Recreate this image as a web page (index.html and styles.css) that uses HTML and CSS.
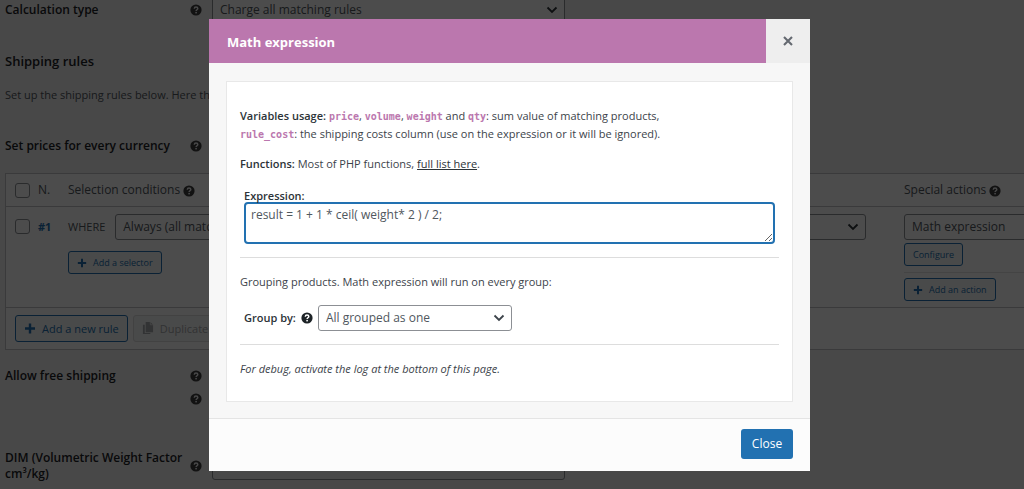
FILE: index.html
```html
<!DOCTYPE html>
<html lang="en">
<head>
<meta charset="utf-8">
<title>Shipping rules</title>
<link rel="stylesheet" href="styles.css">
</head>
<body>
<svg class="sprite" aria-hidden="true">
  <symbol id="i-help" viewBox="0 0 12 12"><circle cx="6" cy="6" r="5.6" fill="currentColor"/><path d="M4.3 4.7C4.3 3.5 5 3 6 3s1.8.6 1.8 1.5C7.8 5.7 6.1 5.8 6.1 7" fill="none" stroke="var(--mark)" stroke-width="1.5"/><rect x="5.3" y="7.9" width="1.6" height="1.5" fill="var(--mark)"/></symbol>
  <symbol id="i-plus" viewBox="0 0 12 12"><path d="M6 1v10M1 6h10" stroke="currentColor" stroke-width="2.4"/></symbol>
  <symbol id="i-copy" viewBox="0 0 13 14"><path d="M4 0h5l3 3v8H4z" fill="currentColor"/><path d="M9 0v3h3" fill="none" stroke="#f6f7f7" stroke-width=".8"/><path d="M3 3H1v10h8v-1H3z" fill="currentColor"/></symbol>
  <symbol id="i-chevron" viewBox="0 0 12 8"><path d="M1.5 1.5 6 6l4.5-4.5" fill="none" stroke="currentColor" stroke-width="1.8"/></symbol>
  <symbol id="i-close" viewBox="0 0 12 12"><path d="m2 2 8 8M10 2l-8 8" stroke="currentColor" stroke-width="2.1"/></symbol>
</svg>

<main class="page">
  <div class="form-row form-row-first">
    <label class="form-label" for="calc">Calculation type</label>
    <svg class="help"><use href="#i-help"/></svg>
    <span class="select form-field"><select id="calc"><option>Charge all matching rules</option></select><svg><use href="#i-chevron"/></svg></span>
  </div>
  <h2 class="section-title">Shipping rules</h2>
  <p class="section-text">Set up the shipping rules below. Here the rules are checked in order.</p>
  <div class="form-row form-row-prices">
    <span class="form-label">Set prices for every currency</span>
    <svg class="help"><use href="#i-help"/></svg>
  </div>

  <table class="rules">
    <thead>
      <tr>
        <th class="col-check"><input type="checkbox" aria-label="Select all rules"></th>
        <th class="col-num">N.</th>
        <th>Selection conditions <svg class="help"><use href="#i-help"/></svg></th>
        <th class="col-action">Special actions <svg class="help"><use href="#i-help"/></svg></th>
      </tr>
    </thead>
    <tbody>
      <tr>
        <td><input type="checkbox" aria-label="Select rule 1"></td>
        <td class="rule-num">#1</td>
        <td>
          <div class="condition">
            <label for="cond">WHERE</label>
            <span class="select"><select id="cond"><option>Always (all matching products)</option></select><svg><use href="#i-chevron"/></svg></span>
          </div>
          <button type="button" class="btn btn-small"><svg><use href="#i-plus"/></svg>Add a selector</button>
        </td>
        <td>
          <div class="actions">
            <span class="select"><select aria-label="Special action"><option>Math expression</option></select><svg><use href="#i-chevron"/></svg></span>
            <button type="button" class="btn btn-small btn-configure">Configure</button>
            <div class="action-add"><button type="button" class="btn btn-small"><svg><use href="#i-plus"/></svg>Add an action</button></div>
          </div>
        </td>
      </tr>
    </tbody>
    <tfoot>
      <tr>
        <td colspan="4">
          <div class="tools">
            <button type="button" class="btn"><svg><use href="#i-plus"/></svg>Add a new rule</button>
            <button type="button" class="btn" disabled><svg><use href="#i-copy"/></svg>Duplicate selected</button>
          </div>
        </td>
      </tr>
    </tfoot>
  </table>

  <div class="form-row form-row-free">
    <span class="form-label">Allow free shipping</span>
    <span class="help-stack"><svg class="help"><use href="#i-help"/></svg><svg class="help"><use href="#i-help"/></svg></span>
  </div>
  <div class="form-row form-row-dim">
    <label class="form-label" for="dim">DIM (Volumetric Weight Factor cm³/kg)</label>
    <svg class="help"><use href="#i-help"/></svg>
    <input class="form-field form-input" id="dim" type="text">
  </div>
</main>

<div class="overlay">
  <section class="modal" role="dialog" aria-labelledby="modal-title">
    <header class="modal-header">
      <h1 id="modal-title">Math expression</h1>
      <button type="button" class="modal-x" aria-label="Close dialog"><svg><use href="#i-close"/></svg></button>
    </header>
    <div class="modal-body">
      <div class="card">
        <p><strong>Variables usage:</strong> <code>price</code>, <code>volume</code>, <code>weight</code> and <code>qty</code>: sum value of matching products,<br><code>rule_cost</code>: the shipping costs column (use on the expression or it will be ignored).</p>
        <p><strong>Functions:</strong> Most of PHP functions, <a href="#functions">full list here</a>.</p>
        <div class="expression">
          <label for="expr">Expression:</label>
          <textarea id="expr">result = 1 + 1 * ceil( weight* 2 ) / 2;</textarea>
        </div>
        <hr>
        <p>Grouping products. Math expression will run on every group:</p>
        <div class="group">
          <label for="group">Group by:</label>
          <svg class="help"><use href="#i-help"/></svg>
          <span class="select"><select id="group"><option>All grouped as one</option></select><svg><use href="#i-chevron"/></svg></span>
        </div>
        <hr>
        <p><em>For debug, activate the log at the bottom of this page.</em></p>
      </div>
    </div>
    <footer class="modal-footer"><button type="button" class="btn-primary">Close</button></footer>
  </section>
</div>
</body>
</html>
```
FILE: styles.css
```css
* { box-sizing: border-box; }
body {
  margin: 0;
  background: #f0f0f1;
  color: #50575e;
  font: 11px/18px "Open Sans", "Noto Sans", sans-serif;
  --mark: #f0f0f1;
}
button, select, input, textarea { font: inherit; color: inherit; }
h1, h2, p { margin: 0; }
.sprite { position: absolute; width: 0; height: 0; }
.help { flex: none; width: 12px; height: 12px; color: #3c3c3c; }

.page { height: 100vh; overflow: hidden; padding-left: 5px; }
.form-row { display: flex; align-items: center; }
.form-label { width: 185px; font-size: 12px; font-weight: 600; line-height: 16px; color: #1d2327; }
.form-field { width: 353px; margin-left: 10px; }
.form-row-first { height: 32px; margin-top: -6px; }
.section-title { margin-top: 26px; font-size: 13px; line-height: 18px; font-weight: 600; color: #1d2327; }
.section-text { margin-top: 16px; white-space: nowrap; }
.form-row-prices { height: 18px; margin-top: 33px; }
.form-row-free { align-items: flex-start; margin-top: 18px; height: 46px; }
.help-stack { display: grid; gap: 11px; padding-top: 2px; }
.form-row-dim { margin-top: 34px; height: 36px; }
.form-input { height: 27px; border: 1px solid #8c8f94; border-radius: 3px; background: #f0f0f1; }

.select { display: block; position: relative; }
.select select {
  display: block; width: 100%; height: 26px; padding: 0 24px 0 7px;
  appearance: none; border: 1px solid #8c8f94; border-radius: 3px; background: #fff;
  font-size: 12px; color: #50575e;
}
.page .select svg { color: #2c3338; }
.select svg { position: absolute; right: 7px; top: 9px; width: 12px; height: 8px; pointer-events: none; }

.rules {
  width: 100%; margin-top: 18px; table-layout: fixed; border-collapse: separate; border-spacing: 0;
  background: #fff; border: 1px solid #c3c4c7; border-right: 0;
}
.rules th, .rules td { padding: 0; text-align: left; vertical-align: top; }
.rules th { height: 33px; vertical-align: middle; font-size: 12px; font-weight: 400; white-space: nowrap; border-bottom: 1px solid #c3c4c7; }
.rules th .help { vertical-align: -3px; }
.rules tbody td { height: 100px; padding-top: 7px; }
.rules tfoot td { height: 42px; padding: 7px 9px; border-top: 1px solid #c3c4c7; }
.col-check { width: 32px; }
.col-num { width: 30px; }
.col-action { width: 120px; }
.rules input {
  display: block; width: 15px; height: 15px; margin: 0 0 0 9px;
  appearance: none; border: 1px solid #8c8f94; border-radius: 3px; background: #fff;
}
.rules tbody input { margin-top: 5px; }
.rules .rule-num { padding-top: 11px; font-weight: 700; color: #2271b1; }
.condition { display: flex; align-items: center; gap: 10px; padding-right: 38px; }
.condition .select { flex: 1; }
.condition + .btn { margin-top: 11px; }
.actions { display: flex; flex-direction: column; align-items: flex-start; }
.actions .select { align-self: stretch; margin-right: -40px; }
.actions .btn-configure { margin-top: 3px; }
.action-add { align-self: stretch; margin-top: 6px; padding-top: 5px; border-top: 1px solid #e4e4e4; }
.tools { display: flex; gap: 5px; }

.btn {
  display: inline-flex; align-items: center; gap: 6px; height: 27px; padding: 0 8px;
  border: 1px solid #2271b1; border-radius: 3px; background: #f6f7f7; color: #2271b1; white-space: nowrap;
}
.btn svg { flex: none; width: 12px; height: 13px; }
.btn:disabled { border-color: #dcdcde; color: #a7aaad; }
.btn-small { height: 23px; font-size: 9px; line-height: 16px; }
.btn-small svg { width: 10px; height: 10px; }

.overlay {
  position: fixed; inset: 0; display: flex; align-items: center; justify-content: center;
  padding-right: 5px; background: rgba(0, 0, 0, .7);
}
.modal { width: 601px; max-width: 100%; background: #f7f7f7; --mark: #fff; }
.modal-header { display: flex; align-items: center; background: #bb77ae; }
.modal-header h1 { flex: 1; padding: 2px 0 0 18px; font-size: 13px; line-height: 20px; font-weight: 700; color: #fff; }
.modal-x { display: grid; place-items: center; width: 44px; height: 44px; padding: 0; border: 0; background: #eee; color: #646970; }
.modal-x svg { width: 12px; height: 12px; }
.modal-body { padding: 18px 17px 16px; }
.card { padding: 25px 13px 23px; border: 1px solid #e8e8e8; background: #fff; color: #3c434a; }
.card p + p { margin-top: 12px; }
.card strong, .card label { font-weight: 600; color: #2c3338; }
.card code { font: bold 10px/10px "DejaVu Sans Mono", monospace; color: #bb77ae; }
.card a { color: #2c3338; }
.card hr { height: 1px; margin: 13px 0 15px; border: 0; background: #ddd; }
.expression { margin-top: 16px; padding: 0 4px; }
.expression label { display: block; line-height: 13px; }
.expression textarea {
  display: block; width: 100%; height: 42px; padding: 2px 5px; resize: vertical;
  border: 2px solid #2271b1; border-radius: 4px; background: #fff; outline: 0; overflow: hidden;
  font-size: 12px; line-height: 18px; color: #50575e;
}
.group { display: flex; align-items: center; gap: 5px; margin-top: 14px; padding-left: 4px; }
.group .help { color: #1d2327; }
.group .select { width: 194px; }
.modal-footer { display: flex; justify-content: flex-end; padding: 10px 17px 12px; border-top: 1px solid #e4e4e4; background: #fcfcfc; }
.btn-primary { height: 30px; width: 52px; padding: 0; border: 0; border-radius: 3px; background: #2271b1; color: #fff; font-size: 12px; }
```
